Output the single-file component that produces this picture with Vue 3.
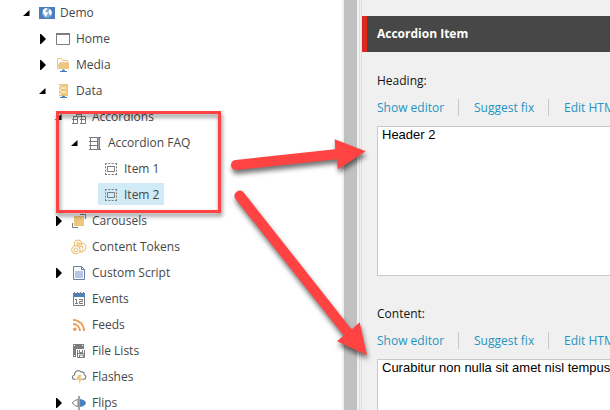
<script setup>
const rows = [
  { label: 'Demo', level: 0, icon: 'globe', state: 'open' },
  { label: 'Home', level: 1, icon: 'window', state: 'closed' },
  { label: 'Media', level: 1, icon: 'media', state: 'closed' },
  { label: 'Data', level: 1, icon: 'data', state: 'open' },
  { label: 'Accordions', level: 2, icon: 'racks', state: 'open' },
  { label: 'Accordion FAQ', level: 3, icon: 'rack', state: 'open' },
  { label: 'Item 1', level: 4, icon: 'item' },
  { label: 'Item 2', level: 4, icon: 'item', selected: true },
  { label: 'Carousels', level: 2, icon: 'carousel', state: 'closed' },
  { label: 'Content Tokens', level: 2, icon: 'tokens' },
  { label: 'Custom Script', level: 2, icon: 'script', state: 'closed' },
  { label: 'Events', level: 2, icon: 'events' },
  { label: 'Feeds', level: 2, icon: 'feed' },
  { label: 'File Lists', level: 2, icon: 'files' },
  { label: 'Flashes', level: 2, icon: 'flash' },
  { label: 'Flips', level: 2, icon: 'flip', state: 'closed' },
]
const fields = [
  { label: 'Heading:', value: 'Header 2' },
  { label: 'Content:', value: 'Curabitur non nulla sit amet nisl tempus' },
]
const actions = ['Show editor', 'Suggest fix', 'Edit HTML']
</script>

<template>
  <div class="screen">
    <nav class="tree">
      <div v-for="row in rows" :key="row.label" class="row" :class="'level-' + row.level">
        <svg class="toggle" viewBox="0 0 11 16">
          <path v-if="row.state === 'open'" d="M6.5 5v6H0z" />
          <path v-if="row.state === 'closed'" d="M1 3h1l4.5 4.5v1L2 13H1z" />
        </svg>
        <div class="node" :class="{ selected: row.selected }">
          <svg class="icon" viewBox="0 0 16 16" fill="none">
            <g v-if="row.icon === 'globe'">
              <path d="M0 2h16v12H0z" fill="#4a80bd" />
              <circle cx="8" cy="8" r="4.9" fill="#82a9d4" />
              <path d="M4 5l2-1.8 2.4.1-.6 1.5-1.5.7.4 1.3 2 .8.1 1.4-1.3 1.5-.7 1.8-1.3-2.6-1.6-1.5zM9.5 4l2 .4 1.3 2.3-.3 2.6-1.4 1.5-.6-2-.9-.8-.1-1.7 1-1z" fill="#fff" />
            </g>
            <g v-else-if="row.icon === 'window'">
              <path d="M1.5 3v10.5h13V3" stroke="#7d7d7d" />
              <path d="M1 2h14v2H1z" fill="#7d7d7d" />
            </g>
            <g v-else-if="row.icon === 'media'">
              <path d="M2.5 12V1.5h4l1 2h5v2M2.5 11l2-5h9v5.5h-11z" stroke="#edc77d" />
              <path d="M4.5 5.5h9v6h-10z" fill="#edc77d" />
              <path d="M8 12v2M5 14.5h7M7 13.5h3" stroke="#4a80bd" />
            </g>
            <g v-else-if="row.icon === 'data'">
              <path d="M4 1h9v12H4z" fill="#edc77d" />
              <path d="M6 5h5M6 9h5" stroke="#fff" />
              <path d="M4 3h2M4 7h2M4 11h2" stroke="#fff" />
              <path d="M8 12.5v2M5 14.5h7M7 13.5h3" stroke="#4a80bd" />
            </g>
            <g v-else-if="row.icon === 'racks'" stroke="#7d7d7d">
              <path d="M5.5 7V2.5h5V7M5 5.5h6M2.5 15V7.5h4V15M10.5 15V7.5h4V15M1 10.5h6M9 10.5h6M1 14.5h6M9 14.5h6M7 7.5h4" />
            </g>
            <g v-else-if="row.icon === 'rack'" stroke="#7d7d7d">
              <path d="M3.5 2v13M10.5 2v13M12.5 2v13M2 2.5h12M2 6.5h9M2 10.5h9M2 14.5h12" />
              <path d="M11.5 3v11" stroke="#a8a8a8" />
            </g>
            <g v-else-if="row.icon === 'item'" stroke="#7d7d7d">
              <path d="M2 2.5h12M2 13.5h12M2.5 2v12M13.5 2v12" stroke-dasharray="2 1.33" />
              <path d="M4.5 5.5h7v5h-7z" />
            </g>
            <g v-else-if="row.icon === 'carousel'">
              <path d="M3 3h10v10H3z" fill="#edc77d" />
              <path d="M9 1.5h5.5V6M1.5 10v4.5H7" stroke="#7d7d7d" />
            </g>
            <g v-else-if="row.icon === 'tokens'" stroke="#edc77d" stroke-width="1.2">
              <circle cx="7" cy="4.7" r="3.6" />
              <circle cx="11" cy="8.3" r="3.9" />
              <circle cx="4.8" cy="10.8" r="4.1" fill="#fff" />
              <circle cx="4.8" cy="10.8" r="1.8" />
              <circle cx="7.2" cy="5" r="1.3" />
              <path d="M9.5 7.5h2.2v2.7M8.6 12.8l3.2.3" />
            </g>
            <g v-else-if="row.icon === 'script'">
              <path d="M2.5 1.5h8l3 3v10h-11zM10.5 1.5v3h3" stroke="#6b80a5" fill="#f8faff" />
              <path d="M4 6h8v7H4z" fill="#b8c6e5" />
            </g>
            <g v-else-if="row.icon === 'events'">
              <path d="M2 2h12v4H2z" fill="#4a80bd" />
              <path d="M3.5 1v3M6.5 1v3M9.5 1v3M12.5 1v3" stroke="#7d7d7d" />
              <path d="M2.5 6v8.5h11V6" stroke="#7d7d7d" />
              <path d="M4 8.5h1.5v4M4 12.5h3M8 8.5h3.5v2h-3v2H12" stroke="#7d7d7d" />
            </g>
            <g v-else-if="row.icon === 'feed'" stroke="#eb9d57" stroke-width="1.8">
              <circle cx="3.8" cy="12.2" r="1.8" fill="#eb9d57" stroke="none" />
              <path d="M2 7a7 7 0 0 1 7 7M2 2.9A11.1 11.1 0 0 1 13.1 14" />
            </g>
            <g v-else-if="row.icon === 'files'">
              <path d="M2 1h11v13H2z" fill="#7d7d7d" />
              <path d="M3 2h1v1H3zM11 2h1v1h-1zM3 12h1v1H3z" fill="#fff" />
              <path d="M5 6h9v9H5z" fill="#fff" />
              <path d="M6.5 7v7.5h7V7M8.5 7v2.5h3V7M8.5 15v-3h4v3M6 10.5h8" stroke="#7d7d7d" />
            </g>
            <g v-else-if="row.icon === 'flash'">
              <path d="M4.5 10.5H4C.5 10.3.7 6.4 3.5 6 3.3 2.7 7.2-.2 10 2.9c2.3-.3 3.4.9 3.2 2.8 2.6.9 2 4.8-1.2 4.8h-.5" stroke="#7d7d7d" stroke-width="1.2" />
              <path d="M7 6h4L9.2 9H12l-4.5 6 .7-4H5z" fill="#edc77d" />
            </g>
            <g v-else>
              <path d="M7 4.5C4 5 2 6.7 1.4 8c.6 1.3 2.6 3 5.6 3.5z" stroke="#7d7d7d" />
              <path d="M9 4c3 .3 5.6 2 6 4-.4 2-3 3.7-6 4z" fill="#4a80bd" />
              <path d="M8 1v14" stroke="#7d7d7d" stroke-width="1.4" />
            </g>
          </svg>
          <span>{{ row.label }}</span>
        </div>
      </div>
    </nav>
    <div class="scrollbar"></div>
    <div class="splitter"></div>
    <main class="editor">
      <header class="title">Accordion Item</header>
      <section v-for="f in fields" :key="f.label" class="field">
        <div class="label">{{ f.label }}</div>
        <div class="actions"><a v-for="a in actions" :key="a">{{ a }}</a></div>
        <div class="input">{{ f.value }}</div>
      </section>
    </main>
    <div class="highlight"></div>
    <svg class="arrows" viewBox="0 0 610 410">
      <path d="M235.5 160L335.2 149.3L334.7 139.3L365.7 151.3L338 169.3L336.7 159.3L236.5 170A5 5 0 0 1 235.5 160Z" />
      <path d="M243.3 192L351.7 329.5L359.7 322.3L367 355.3L337 341.2L343.7 335.5L235 198.2A5.3 5.3 0 0 1 243.3 192Z" />
    </svg>
  </div>
</template>

<style>
body { margin: 0; overflow: hidden; }
</style>

<style scoped>
.screen {
  position: relative;
  display: flex;
  width: 610px;
  height: 410px;
  overflow: hidden;
  background: #fff;
  font-family: "Open Sans", sans-serif;
  font-size: 12px;
}
.tree { flex: 0 0 342px; overflow: hidden; color: #474747; }
.row { display: flex; align-items: flex-start; box-sizing: border-box; height: 26px; padding-top: 1px; white-space: nowrap; }
.level-0 { padding-left: 23px; }
.level-1 { padding-left: 39px; }
.level-2 { padding-left: 55px; }
.level-3 { padding-left: 71px; }
.level-4 { padding-left: 87px; }
.toggle { width: 11px; height: 16px; margin-top: 4px; flex: none; fill: #000; }
.node { display: flex; align-items: flex-start; gap: 5px; height: 22px; padding: 0 5px; line-height: 24px; }
.selected { background: #d0eaf6; }
.icon { width: 16px; height: 16px; margin-top: 4px; flex: none; }
.scrollbar { flex: 0 0 13px; background: #c1c1c1; border: solid #f0f0f0; border-width: 0 2px; }
.splitter { flex: 0 0 1px; background: #f0f0f0; border: solid #dfdfdf; border-width: 0 1px; }
.editor { flex: 1; min-width: 0; padding-top: 16px; background: #f0f0f0; }
.title {
  height: 36px;
  line-height: 36px;
  padding-left: 10px;
  border-left: 5px solid #dc291e;
  background: #474747;
  color: #fff;
  font-weight: 700;
}
.field { height: 233px; padding: 20px 0 0 15px; box-sizing: border-box; overflow: hidden; }
.label { height: 18px; line-height: 18px; color: #131313; }
.actions { display: flex; width: 300px; height: 17px; margin-top: 9px; line-height: 18px; color: #2694c0; }
.actions a { box-sizing: border-box; flex: 0 0 90px; padding-left: 15px; border-left: 1px solid #c9c9c9; }
.actions a:first-child { flex-basis: 81px; padding-left: 0; border-left: 0; }
.input {
  box-sizing: border-box;
  width: 300px;
  height: 150px;
  margin-top: 10px;
  padding: 0 4px;
  border: 1px solid #c9c9c9;
  background: #fff;
  color: #000;
  font: 13px/15px "Liberation Sans", Arial, sans-serif;
  white-space: nowrap;
}
.highlight {
  position: absolute;
  left: 56px;
  top: 111px;
  width: 159px;
  height: 96px;
  border: 3px solid #ff4343;
  filter: drop-shadow(1px 3px 2px rgba(0, 0, 0, 0.5));
}
.arrows {
  position: absolute;
  inset: 0;
  width: 610px;
  height: 410px;
  fill: #ff4343;
  filter: drop-shadow(1px 4px 2.5px rgba(0, 0, 0, 0.55));
}
</style>
